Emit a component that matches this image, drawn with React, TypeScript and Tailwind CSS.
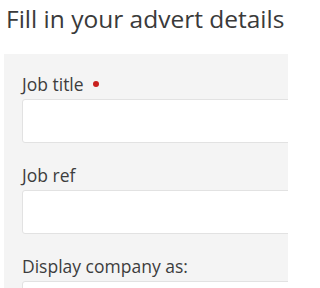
import React from 'react';

const fields = [
  { label: 'Job title', required: true },
  { label: 'Job ref', required: false },
  { label: 'Display company as:', required: false },
];

export default function App() {
  return (
    <div className="w-[288px] h-[288px] overflow-hidden bg-white font-['Open_Sans',sans-serif] text-[#3a3a3a]">
      <h1 className="pl-[6px] pt-[3px] text-[24.5px] leading-[32px] tracking-[0px] whitespace-nowrap">
        Fill in your advert details
      </h1>

      <div className="ml-[4px] mt-[19px] w-[400px] bg-[#f4f4f4] pl-[18px] pt-[17px]">
        {fields.map((f) => (
          <div key={f.label} className="mb-[19px]">
            <label className="flex items-center gap-[9px] text-[17.5px] leading-[26px] text-[#3d3d3d]">
              {f.label}
              {f.required && <span className="w-[6px] h-[6px] rounded-full bg-[#c8201e] inline-block" />}
            </label>
            <input
              type="text"
              className="block mt-[2px] w-[360px] h-[44px] bg-white border border-[#e2e2e2] rounded-[3px]"
            />
          </div>
        ))}
      </div>
    </div>
  );
}
